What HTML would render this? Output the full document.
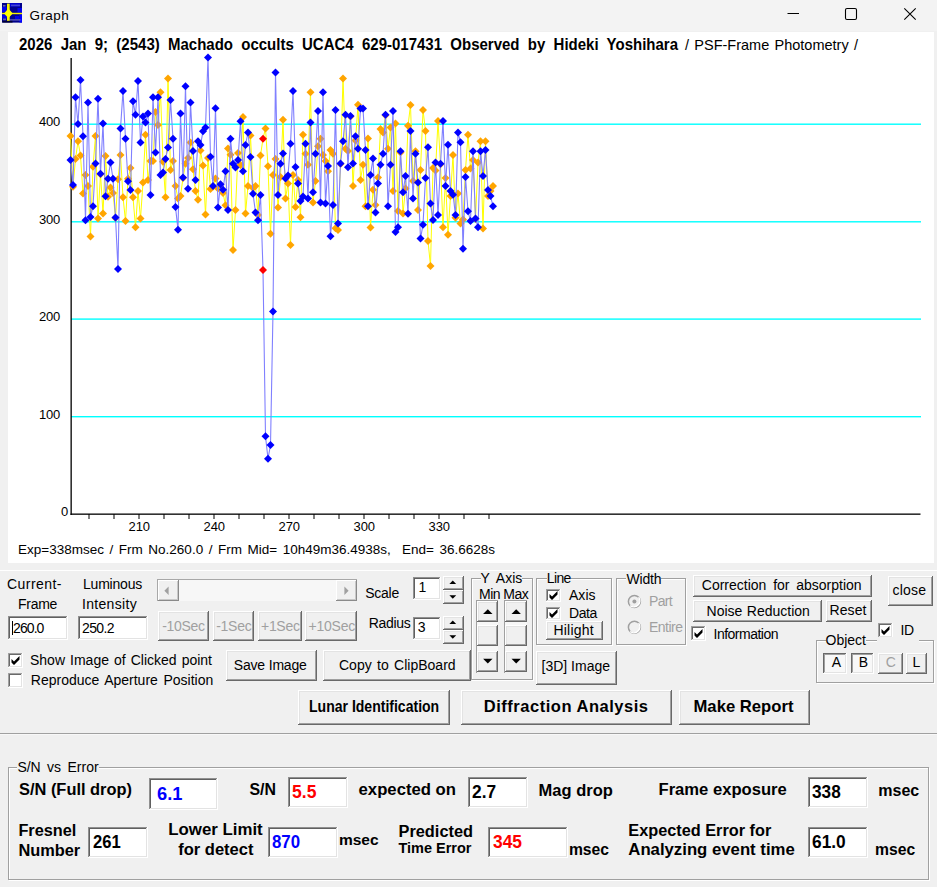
<!DOCTYPE html>
<html lang="en"><head><meta charset="utf-8"><title>Graph</title>
<style>
html,body{margin:0;padding:0}
body{width:937px;height:887px;position:relative;overflow:hidden;background:#f0f0f0;font-family:"Liberation Sans",sans-serif;color:#000}
.t{position:absolute;white-space:pre;z-index:5}
.btn{position:absolute;background:#f0f0f0;box-sizing:border-box;box-shadow:inset -1px -1px 0 #696969,inset 1px 1px 0 #fff,inset -2px -2px 0 #a0a0a0,inset 2px 2px 0 #e3e3e3}
.btnp{position:absolute;background:#f8f8f8;box-sizing:border-box;box-shadow:inset -1px -1px 0 #fff,inset 1px 1px 0 #696969,inset -2px -2px 0 #e3e3e3,inset 2px 2px 0 #a0a0a0}
.inp{position:absolute;background:#fff;box-sizing:border-box;box-shadow:inset -1px -1px 0 #fff,inset 1px 1px 0 #909090,inset -2px -2px 0 #e3e3e3,inset 2px 2px 0 #606060}
.chk{position:absolute;width:13px;height:13px;background:#fff;box-sizing:border-box;box-shadow:inset -1px -1px 0 #fff,inset 1px 1px 0 #a0a0a0,inset -2px -2px 0 #e3e3e3,inset 2px 2px 0 #696969}
.chk svg{position:absolute;left:0;top:0}
.grp{position:absolute;border:1px solid #a0a0a0;box-shadow:1px 1px 0 #fff, inset 1px 1px 0 #fff}
.sb{position:absolute;background:#f7f7f7}
.btnf{position:absolute;background:#f0f0f0;box-sizing:border-box;box-shadow:inset -1px -1px 0 #8a8a8a,inset 1px 1px 0 #fff,inset -2px -2px 0 #c8c8c8}
svg.ov{position:absolute;left:0;top:0;z-index:4;pointer-events:none}
</style></head>
<body>
<div style="position:absolute;left:0;top:0;width:937px;height:31px;background:#f3f3f3"></div>
<svg style="position:absolute;left:0;top:0" width="24" height="24" viewBox="0 0 24 24"><rect x="2" y="3" width="20" height="19.6" fill="#00008c"/><rect x="2" y="7" width="4.5" height="5" fill="#0000f0"/><rect x="2" y="14.5" width="5" height="4" fill="#0000e0"/><rect x="17.5" y="8" width="4.5" height="4.5" fill="#0000f0"/><rect x="19.5" y="14.5" width="2.5" height="8" fill="#0000ff"/><rect x="10" y="3.2" width="10" height="3.5" fill="#0000d8"/><rect x="15" y="16" width="4" height="3" fill="#0000e8"/><rect x="3" y="5" width="2.5" height="1.6" fill="#8c8cc8" opacity=".7"/><rect x="11" y="4.6" width="9" height="1.6" fill="#7c7ccc" opacity=".55"/><rect x="3" y="18.5" width="3" height="1.8" fill="#9c9cc0" opacity=".6"/><rect x="9.5" y="19" width="11" height="1.8" fill="#8080c8" opacity=".55"/><rect x="2.5" y="20.8" width="10" height="1.8" fill="#000020" opacity=".8"/><rect x="2" y="12.8" width="20" height="1.4" fill="#f4f000"/><rect x="7" y="3.6" width="2.7" height="17.2" fill="#f8f400"/><polygon points="4,13.5 8.3,8.6 12.8,13.5 8.3,18" fill="#ffff00"/></svg>
<svg class="ov" width="937" height="31"><path d="M787.5 13.5H799" stroke="#000" stroke-width="1" fill="none"/><rect x="845.5" y="8.5" width="11" height="11" rx="1.5" fill="none" stroke="#000" stroke-width="1.1"/><path d="M904.3 8.3L915.7 19.7M915.7 8.3L904.3 19.7" stroke="#000" stroke-width="1.1" fill="none"/></svg>
<svg id="chart" width="926" height="531" viewBox="8 32 926 531" style="position:absolute;left:8px;top:32px">
<rect x="8" y="32" width="926" height="531" fill="#fff"/>
<rect x="71" y="123.50" width="850" height="1.4" fill="#00ffff"/>
<rect x="71" y="221.10" width="850" height="1.4" fill="#00ffff"/>
<rect x="71" y="318.40" width="850" height="1.4" fill="#00ffff"/>
<rect x="71" y="416.00" width="850" height="1.4" fill="#00ffff"/>
<rect x="70.5" y="58" width="1.3" height="457" fill="#000"/>
<rect x="70.5" y="513.5" width="850" height="1.3" fill="#000"/>
<polyline points="70.5,136.0 73.0,186.7 75.5,159.0 78.0,141.3 80.5,155.5 83.0,193.6 85.5,175.0 88.0,186.0 90.5,236.4 93.0,166.7 95.5,136.0 98.0,218.4 100.5,174.2 103.0,213.4 105.5,156.0 108.0,196.7 110.5,187.4 113.0,193.0 115.5,217.9 118.0,179.3 120.5,155.0 123.0,197.3 125.5,220.9 128.0,178.7 130.5,168.0 133.0,197.3 135.5,227.3 138.0,191.0 140.5,218.6 143.0,182.4 145.5,134.8 148.0,180.0 150.5,161.0 153.0,161.0 155.5,112.0 158.0,125.0 160.5,92.3 163.0,161.7 165.5,197.3 168.0,78.6 170.5,170.0 173.0,161.0 175.5,186.0 178.0,198.5 180.5,196.0 183.0,177.9 185.5,163.7 188.0,158.0 190.5,142.4 193.0,169.3 195.5,191.0 198.0,199.7 200.5,150.5 203.0,165.6 205.5,214.6 208.0,158.0 210.5,189.0 213.0,186.5 215.5,178.6 218.0,188.5 220.5,184.7 223.0,192.9 225.5,205.3 228.0,148.6 230.5,154.8 233.0,250.0 235.5,209.9 238.0,153.0 240.5,165.0 243.0,117.0 245.5,213.6 248.0,186.0 250.5,135.6 253.0,188.0 255.5,186.0 258.0,215.0 260.5,155.5 263.0,138.7 265.5,128.4 268.0,166.2 270.5,233.8 273.0,174.9 275.5,159.0 278.0,207.4 280.5,177.0 283.0,119.7 285.5,198.5 288.0,183.6 290.5,245.0 293.0,174.9 295.5,207.1 298.0,179.9 300.5,217.3 303.0,134.8 305.5,153.7 308.0,164.8 310.5,92.3 313.0,202.4 315.5,181.1 318.0,146.2 320.5,138.8 323.0,155.0 325.5,161.0 328.0,171.2 330.5,150.0 333.0,153.7 335.5,228.2 338.0,230.1 340.5,164.1 343.0,78.6 345.5,148.7 348.0,151.0 350.5,116.5 353.0,186.0 355.5,140.6 358.0,104.7 360.5,179.9 363.0,164.8 365.5,206.2 368.0,138.4 370.5,227.6 373.0,189.8 375.5,204.9 378.0,177.4 380.5,128.9 383.0,132.6 385.5,115.3 388.0,148.7 390.5,127.6 393.0,191.0 395.5,123.5 398.0,211.0 400.5,152.5 403.0,213.4 405.5,188.6 408.0,125.8 410.5,105.0 413.0,181.0 415.5,151.3 418.0,210.0 420.5,169.9 423.0,110.0 425.5,131.0 428.0,241.0 430.5,266.0 433.0,168.0 435.5,170.5 438.0,120.9 440.5,164.2 443.0,227.3 445.5,178.0 448.0,234.8 450.5,196.0 453.0,155.0 455.5,217.8 458.0,193.6 460.5,223.6 463.0,219.6 465.5,169.9 468.0,134.8 470.5,168.6 473.0,160.0 475.5,218.9 478.0,162.4 480.5,141.3 483.0,228.6 485.5,141.3 488.0,196.0 490.5,191.0 493.0,186.0" fill="none" stroke="#ffff00" stroke-width="1"/>
<polygon points="66.5,136.0 70.5,132.0 74.5,136.0 70.5,140.0" fill="#ffa500"/>
<polygon points="69.0,186.7 73.0,182.7 77.0,186.7 73.0,190.7" fill="#ffa500"/>
<polygon points="71.5,159.0 75.5,155.0 79.5,159.0 75.5,163.0" fill="#ffa500"/>
<polygon points="74.0,141.3 78.0,137.3 82.0,141.3 78.0,145.3" fill="#ffa500"/>
<polygon points="76.5,155.5 80.5,151.5 84.5,155.5 80.5,159.5" fill="#ffa500"/>
<polygon points="79.0,193.6 83.0,189.6 87.0,193.6 83.0,197.6" fill="#ffa500"/>
<polygon points="81.5,175.0 85.5,171.0 89.5,175.0 85.5,179.0" fill="#ffa500"/>
<polygon points="84.0,186.0 88.0,182.0 92.0,186.0 88.0,190.0" fill="#ffa500"/>
<polygon points="86.5,236.4 90.5,232.4 94.5,236.4 90.5,240.4" fill="#ffa500"/>
<polygon points="89.0,166.7 93.0,162.7 97.0,166.7 93.0,170.7" fill="#ffa500"/>
<polygon points="91.5,136.0 95.5,132.0 99.5,136.0 95.5,140.0" fill="#ffa500"/>
<polygon points="94.0,218.4 98.0,214.4 102.0,218.4 98.0,222.4" fill="#ffa500"/>
<polygon points="96.5,174.2 100.5,170.2 104.5,174.2 100.5,178.2" fill="#ffa500"/>
<polygon points="99.0,213.4 103.0,209.4 107.0,213.4 103.0,217.4" fill="#ffa500"/>
<polygon points="101.5,156.0 105.5,152.0 109.5,156.0 105.5,160.0" fill="#ffa500"/>
<polygon points="104.0,196.7 108.0,192.7 112.0,196.7 108.0,200.7" fill="#ffa500"/>
<polygon points="106.5,187.4 110.5,183.4 114.5,187.4 110.5,191.4" fill="#ffa500"/>
<polygon points="109.0,193.0 113.0,189.0 117.0,193.0 113.0,197.0" fill="#ffa500"/>
<polygon points="111.5,217.9 115.5,213.9 119.5,217.9 115.5,221.9" fill="#ffa500"/>
<polygon points="114.0,179.3 118.0,175.3 122.0,179.3 118.0,183.3" fill="#ffa500"/>
<polygon points="116.5,155.0 120.5,151.0 124.5,155.0 120.5,159.0" fill="#ffa500"/>
<polygon points="119.0,197.3 123.0,193.3 127.0,197.3 123.0,201.3" fill="#ffa500"/>
<polygon points="121.5,220.9 125.5,216.9 129.5,220.9 125.5,224.9" fill="#ffa500"/>
<polygon points="124.0,178.7 128.0,174.7 132.0,178.7 128.0,182.7" fill="#ffa500"/>
<polygon points="126.5,168.0 130.5,164.0 134.5,168.0 130.5,172.0" fill="#ffa500"/>
<polygon points="129.0,197.3 133.0,193.3 137.0,197.3 133.0,201.3" fill="#ffa500"/>
<polygon points="131.5,227.3 135.5,223.3 139.5,227.3 135.5,231.3" fill="#ffa500"/>
<polygon points="134.0,191.0 138.0,187.0 142.0,191.0 138.0,195.0" fill="#ffa500"/>
<polygon points="136.5,218.6 140.5,214.6 144.5,218.6 140.5,222.6" fill="#ffa500"/>
<polygon points="139.0,182.4 143.0,178.4 147.0,182.4 143.0,186.4" fill="#ffa500"/>
<polygon points="141.5,134.8 145.5,130.8 149.5,134.8 145.5,138.8" fill="#ffa500"/>
<polygon points="144.0,180.0 148.0,176.0 152.0,180.0 148.0,184.0" fill="#ffa500"/>
<polygon points="146.5,161.0 150.5,157.0 154.5,161.0 150.5,165.0" fill="#ffa500"/>
<polygon points="149.0,161.0 153.0,157.0 157.0,161.0 153.0,165.0" fill="#ffa500"/>
<polygon points="151.5,112.0 155.5,108.0 159.5,112.0 155.5,116.0" fill="#ffa500"/>
<polygon points="154.0,125.0 158.0,121.0 162.0,125.0 158.0,129.0" fill="#ffa500"/>
<polygon points="156.5,92.3 160.5,88.3 164.5,92.3 160.5,96.3" fill="#ffa500"/>
<polygon points="159.0,161.7 163.0,157.7 167.0,161.7 163.0,165.7" fill="#ffa500"/>
<polygon points="161.5,197.3 165.5,193.3 169.5,197.3 165.5,201.3" fill="#ffa500"/>
<polygon points="164.0,78.6 168.0,74.6 172.0,78.6 168.0,82.6" fill="#ffa500"/>
<polygon points="166.5,170.0 170.5,166.0 174.5,170.0 170.5,174.0" fill="#ffa500"/>
<polygon points="169.0,161.0 173.0,157.0 177.0,161.0 173.0,165.0" fill="#ffa500"/>
<polygon points="171.5,186.0 175.5,182.0 179.5,186.0 175.5,190.0" fill="#ffa500"/>
<polygon points="174.0,198.5 178.0,194.5 182.0,198.5 178.0,202.5" fill="#ffa500"/>
<polygon points="176.5,196.0 180.5,192.0 184.5,196.0 180.5,200.0" fill="#ffa500"/>
<polygon points="179.0,177.9 183.0,173.9 187.0,177.9 183.0,181.9" fill="#ffa500"/>
<polygon points="181.5,163.7 185.5,159.7 189.5,163.7 185.5,167.7" fill="#ffa500"/>
<polygon points="184.0,158.0 188.0,154.0 192.0,158.0 188.0,162.0" fill="#ffa500"/>
<polygon points="186.5,142.4 190.5,138.4 194.5,142.4 190.5,146.4" fill="#ffa500"/>
<polygon points="189.0,169.3 193.0,165.3 197.0,169.3 193.0,173.3" fill="#ffa500"/>
<polygon points="191.5,191.0 195.5,187.0 199.5,191.0 195.5,195.0" fill="#ffa500"/>
<polygon points="194.0,199.7 198.0,195.7 202.0,199.7 198.0,203.7" fill="#ffa500"/>
<polygon points="196.5,150.5 200.5,146.5 204.5,150.5 200.5,154.5" fill="#ffa500"/>
<polygon points="199.0,165.6 203.0,161.6 207.0,165.6 203.0,169.6" fill="#ffa500"/>
<polygon points="201.5,214.6 205.5,210.6 209.5,214.6 205.5,218.6" fill="#ffa500"/>
<polygon points="204.0,158.0 208.0,154.0 212.0,158.0 208.0,162.0" fill="#ffa500"/>
<polygon points="206.5,189.0 210.5,185.0 214.5,189.0 210.5,193.0" fill="#ffa500"/>
<polygon points="209.0,186.5 213.0,182.5 217.0,186.5 213.0,190.5" fill="#ffa500"/>
<polygon points="211.5,178.6 215.5,174.6 219.5,178.6 215.5,182.6" fill="#ffa500"/>
<polygon points="214.0,188.5 218.0,184.5 222.0,188.5 218.0,192.5" fill="#ffa500"/>
<polygon points="216.5,184.7 220.5,180.7 224.5,184.7 220.5,188.7" fill="#ffa500"/>
<polygon points="219.0,192.9 223.0,188.9 227.0,192.9 223.0,196.9" fill="#ffa500"/>
<polygon points="221.5,205.3 225.5,201.3 229.5,205.3 225.5,209.3" fill="#ffa500"/>
<polygon points="224.0,148.6 228.0,144.6 232.0,148.6 228.0,152.6" fill="#ffa500"/>
<polygon points="226.5,154.8 230.5,150.8 234.5,154.8 230.5,158.8" fill="#ffa500"/>
<polygon points="229.0,250.0 233.0,246.0 237.0,250.0 233.0,254.0" fill="#ffa500"/>
<polygon points="231.5,209.9 235.5,205.9 239.5,209.9 235.5,213.9" fill="#ffa500"/>
<polygon points="234.0,153.0 238.0,149.0 242.0,153.0 238.0,157.0" fill="#ffa500"/>
<polygon points="236.5,165.0 240.5,161.0 244.5,165.0 240.5,169.0" fill="#ffa500"/>
<polygon points="239.0,117.0 243.0,113.0 247.0,117.0 243.0,121.0" fill="#ffa500"/>
<polygon points="241.5,213.6 245.5,209.6 249.5,213.6 245.5,217.6" fill="#ffa500"/>
<polygon points="244.0,186.0 248.0,182.0 252.0,186.0 248.0,190.0" fill="#ffa500"/>
<polygon points="246.5,135.6 250.5,131.6 254.5,135.6 250.5,139.6" fill="#ffa500"/>
<polygon points="249.0,188.0 253.0,184.0 257.0,188.0 253.0,192.0" fill="#ffa500"/>
<polygon points="251.5,186.0 255.5,182.0 259.5,186.0 255.5,190.0" fill="#ffa500"/>
<polygon points="254.0,215.0 258.0,211.0 262.0,215.0 258.0,219.0" fill="#ffa500"/>
<polygon points="256.5,155.5 260.5,151.5 264.5,155.5 260.5,159.5" fill="#ffa500"/>
<polygon points="259.0,138.7 263.0,134.7 267.0,138.7 263.0,142.7" fill="#ff0000"/>
<polygon points="261.5,128.4 265.5,124.4 269.5,128.4 265.5,132.4" fill="#ffa500"/>
<polygon points="264.0,166.2 268.0,162.2 272.0,166.2 268.0,170.2" fill="#ffa500"/>
<polygon points="266.5,233.8 270.5,229.8 274.5,233.8 270.5,237.8" fill="#ffa500"/>
<polygon points="269.0,174.9 273.0,170.9 277.0,174.9 273.0,178.9" fill="#ffa500"/>
<polygon points="271.5,159.0 275.5,155.0 279.5,159.0 275.5,163.0" fill="#ffa500"/>
<polygon points="274.0,207.4 278.0,203.4 282.0,207.4 278.0,211.4" fill="#ffa500"/>
<polygon points="276.5,177.0 280.5,173.0 284.5,177.0 280.5,181.0" fill="#ffa500"/>
<polygon points="279.0,119.7 283.0,115.7 287.0,119.7 283.0,123.7" fill="#ffa500"/>
<polygon points="281.5,198.5 285.5,194.5 289.5,198.5 285.5,202.5" fill="#ffa500"/>
<polygon points="284.0,183.6 288.0,179.6 292.0,183.6 288.0,187.6" fill="#ffa500"/>
<polygon points="286.5,245.0 290.5,241.0 294.5,245.0 290.5,249.0" fill="#ffa500"/>
<polygon points="289.0,174.9 293.0,170.9 297.0,174.9 293.0,178.9" fill="#ffa500"/>
<polygon points="291.5,207.1 295.5,203.1 299.5,207.1 295.5,211.1" fill="#ffa500"/>
<polygon points="294.0,179.9 298.0,175.9 302.0,179.9 298.0,183.9" fill="#ffa500"/>
<polygon points="296.5,217.3 300.5,213.3 304.5,217.3 300.5,221.3" fill="#ffa500"/>
<polygon points="299.0,134.8 303.0,130.8 307.0,134.8 303.0,138.8" fill="#ffa500"/>
<polygon points="301.5,153.7 305.5,149.7 309.5,153.7 305.5,157.7" fill="#ffa500"/>
<polygon points="304.0,164.8 308.0,160.8 312.0,164.8 308.0,168.8" fill="#ffa500"/>
<polygon points="306.5,92.3 310.5,88.3 314.5,92.3 310.5,96.3" fill="#ffa500"/>
<polygon points="309.0,202.4 313.0,198.4 317.0,202.4 313.0,206.4" fill="#ffa500"/>
<polygon points="311.5,181.1 315.5,177.1 319.5,181.1 315.5,185.1" fill="#ffa500"/>
<polygon points="314.0,146.2 318.0,142.2 322.0,146.2 318.0,150.2" fill="#ffa500"/>
<polygon points="316.5,138.8 320.5,134.8 324.5,138.8 320.5,142.8" fill="#ffa500"/>
<polygon points="319.0,155.0 323.0,151.0 327.0,155.0 323.0,159.0" fill="#ffa500"/>
<polygon points="321.5,161.0 325.5,157.0 329.5,161.0 325.5,165.0" fill="#ffa500"/>
<polygon points="324.0,171.2 328.0,167.2 332.0,171.2 328.0,175.2" fill="#ffa500"/>
<polygon points="326.5,150.0 330.5,146.0 334.5,150.0 330.5,154.0" fill="#ffa500"/>
<polygon points="329.0,153.7 333.0,149.7 337.0,153.7 333.0,157.7" fill="#ffa500"/>
<polygon points="331.5,228.2 335.5,224.2 339.5,228.2 335.5,232.2" fill="#ffa500"/>
<polygon points="334.0,230.1 338.0,226.1 342.0,230.1 338.0,234.1" fill="#ffa500"/>
<polygon points="336.5,164.1 340.5,160.1 344.5,164.1 340.5,168.1" fill="#ffa500"/>
<polygon points="339.0,78.6 343.0,74.6 347.0,78.6 343.0,82.6" fill="#ffa500"/>
<polygon points="341.5,148.7 345.5,144.7 349.5,148.7 345.5,152.7" fill="#ffa500"/>
<polygon points="344.0,151.0 348.0,147.0 352.0,151.0 348.0,155.0" fill="#ffa500"/>
<polygon points="346.5,116.5 350.5,112.5 354.5,116.5 350.5,120.5" fill="#ffa500"/>
<polygon points="349.0,186.0 353.0,182.0 357.0,186.0 353.0,190.0" fill="#ffa500"/>
<polygon points="351.5,140.6 355.5,136.6 359.5,140.6 355.5,144.6" fill="#ffa500"/>
<polygon points="354.0,104.7 358.0,100.7 362.0,104.7 358.0,108.7" fill="#ffa500"/>
<polygon points="356.5,179.9 360.5,175.9 364.5,179.9 360.5,183.9" fill="#ffa500"/>
<polygon points="359.0,164.8 363.0,160.8 367.0,164.8 363.0,168.8" fill="#ffa500"/>
<polygon points="361.5,206.2 365.5,202.2 369.5,206.2 365.5,210.2" fill="#ffa500"/>
<polygon points="364.0,138.4 368.0,134.4 372.0,138.4 368.0,142.4" fill="#ffa500"/>
<polygon points="366.5,227.6 370.5,223.6 374.5,227.6 370.5,231.6" fill="#ffa500"/>
<polygon points="369.0,189.8 373.0,185.8 377.0,189.8 373.0,193.8" fill="#ffa500"/>
<polygon points="371.5,204.9 375.5,200.9 379.5,204.9 375.5,208.9" fill="#ffa500"/>
<polygon points="374.0,177.4 378.0,173.4 382.0,177.4 378.0,181.4" fill="#ffa500"/>
<polygon points="376.5,128.9 380.5,124.9 384.5,128.9 380.5,132.9" fill="#ffa500"/>
<polygon points="379.0,132.6 383.0,128.6 387.0,132.6 383.0,136.6" fill="#ffa500"/>
<polygon points="381.5,115.3 385.5,111.3 389.5,115.3 385.5,119.3" fill="#ffa500"/>
<polygon points="384.0,148.7 388.0,144.7 392.0,148.7 388.0,152.7" fill="#ffa500"/>
<polygon points="386.5,127.6 390.5,123.6 394.5,127.6 390.5,131.6" fill="#ffa500"/>
<polygon points="389.0,191.0 393.0,187.0 397.0,191.0 393.0,195.0" fill="#ffa500"/>
<polygon points="391.5,123.5 395.5,119.5 399.5,123.5 395.5,127.5" fill="#ffa500"/>
<polygon points="394.0,211.0 398.0,207.0 402.0,211.0 398.0,215.0" fill="#ffa500"/>
<polygon points="396.5,152.5 400.5,148.5 404.5,152.5 400.5,156.5" fill="#ffa500"/>
<polygon points="399.0,213.4 403.0,209.4 407.0,213.4 403.0,217.4" fill="#ffa500"/>
<polygon points="401.5,188.6 405.5,184.6 409.5,188.6 405.5,192.6" fill="#ffa500"/>
<polygon points="404.0,125.8 408.0,121.8 412.0,125.8 408.0,129.8" fill="#ffa500"/>
<polygon points="406.5,105.0 410.5,101.0 414.5,105.0 410.5,109.0" fill="#ffa500"/>
<polygon points="409.0,181.0 413.0,177.0 417.0,181.0 413.0,185.0" fill="#ffa500"/>
<polygon points="411.5,151.3 415.5,147.3 419.5,151.3 415.5,155.3" fill="#ffa500"/>
<polygon points="414.0,210.0 418.0,206.0 422.0,210.0 418.0,214.0" fill="#ffa500"/>
<polygon points="416.5,169.9 420.5,165.9 424.5,169.9 420.5,173.9" fill="#ffa500"/>
<polygon points="419.0,110.0 423.0,106.0 427.0,110.0 423.0,114.0" fill="#ffa500"/>
<polygon points="421.5,131.0 425.5,127.0 429.5,131.0 425.5,135.0" fill="#ffa500"/>
<polygon points="424.0,241.0 428.0,237.0 432.0,241.0 428.0,245.0" fill="#ffa500"/>
<polygon points="426.5,266.0 430.5,262.0 434.5,266.0 430.5,270.0" fill="#ffa500"/>
<polygon points="429.0,168.0 433.0,164.0 437.0,168.0 433.0,172.0" fill="#ffa500"/>
<polygon points="431.5,170.5 435.5,166.5 439.5,170.5 435.5,174.5" fill="#ffa500"/>
<polygon points="434.0,120.9 438.0,116.9 442.0,120.9 438.0,124.9" fill="#ffa500"/>
<polygon points="436.5,164.2 440.5,160.2 444.5,164.2 440.5,168.2" fill="#ffa500"/>
<polygon points="439.0,227.3 443.0,223.3 447.0,227.3 443.0,231.3" fill="#ffa500"/>
<polygon points="441.5,178.0 445.5,174.0 449.5,178.0 445.5,182.0" fill="#ffa500"/>
<polygon points="444.0,234.8 448.0,230.8 452.0,234.8 448.0,238.8" fill="#ffa500"/>
<polygon points="446.5,196.0 450.5,192.0 454.5,196.0 450.5,200.0" fill="#ffa500"/>
<polygon points="449.0,155.0 453.0,151.0 457.0,155.0 453.0,159.0" fill="#ffa500"/>
<polygon points="451.5,217.8 455.5,213.8 459.5,217.8 455.5,221.8" fill="#ffa500"/>
<polygon points="454.0,193.6 458.0,189.6 462.0,193.6 458.0,197.6" fill="#ffa500"/>
<polygon points="456.5,223.6 460.5,219.6 464.5,223.6 460.5,227.6" fill="#ffa500"/>
<polygon points="459.0,219.6 463.0,215.6 467.0,219.6 463.0,223.6" fill="#ffa500"/>
<polygon points="461.5,169.9 465.5,165.9 469.5,169.9 465.5,173.9" fill="#ffa500"/>
<polygon points="464.0,134.8 468.0,130.8 472.0,134.8 468.0,138.8" fill="#ffa500"/>
<polygon points="466.5,168.6 470.5,164.6 474.5,168.6 470.5,172.6" fill="#ffa500"/>
<polygon points="469.0,160.0 473.0,156.0 477.0,160.0 473.0,164.0" fill="#ffa500"/>
<polygon points="471.5,218.9 475.5,214.9 479.5,218.9 475.5,222.9" fill="#ffa500"/>
<polygon points="474.0,162.4 478.0,158.4 482.0,162.4 478.0,166.4" fill="#ffa500"/>
<polygon points="476.5,141.3 480.5,137.3 484.5,141.3 480.5,145.3" fill="#ffa500"/>
<polygon points="479.0,228.6 483.0,224.6 487.0,228.6 483.0,232.6" fill="#ffa500"/>
<polygon points="481.5,141.3 485.5,137.3 489.5,141.3 485.5,145.3" fill="#ffa500"/>
<polygon points="484.0,196.0 488.0,192.0 492.0,196.0 488.0,200.0" fill="#ffa500"/>
<polygon points="486.5,191.0 490.5,187.0 494.5,191.0 490.5,195.0" fill="#ffa500"/>
<polygon points="489.0,186.0 493.0,182.0 497.0,186.0 493.0,190.0" fill="#ffa500"/>
<polyline points="70.5,159.9 73.0,184.9 75.5,97.2 78.0,123.9 80.5,79.9 83.0,136.3 85.5,220.2 88.0,102.4 90.5,217.1 93.0,206.2 95.5,163.6 98.0,98.7 100.5,173.7 103.0,123.5 105.5,196.3 108.0,178.7 110.5,162.4 113.0,178.7 115.5,217.4 118.0,268.9 120.5,128.6 123.0,91.0 125.5,138.8 128.0,181.2 130.5,189.9 133.0,101.2 135.5,114.8 138.0,81.0 140.5,142.5 143.0,116.5 145.5,122.4 148.0,113.6 150.5,195.0 153.0,97.2 155.5,152.4 158.0,97.2 160.5,175.0 163.0,172.5 165.5,158.9 168.0,147.5 170.5,100.0 173.0,138.8 175.5,207.1 178.0,229.7 180.5,113.5 183.0,177.4 185.5,86.2 188.0,188.8 190.5,102.4 193.0,151.0 195.5,179.9 198.0,141.2 200.5,145.0 203.0,131.3 205.5,127.5 208.0,57.4 210.5,156.7 213.0,186.0 215.5,108.3 218.0,207.4 220.5,184.2 223.0,189.8 225.5,171.2 228.0,209.9 230.5,138.7 233.0,163.7 235.5,167.4 238.0,160.0 240.5,121.3 243.0,171.2 245.5,145.0 248.0,132.5 250.5,157.0 253.0,193.7 255.5,212.4 258.0,220.2 260.5,195.0 263.0,270.0 265.5,436.2 268.0,458.7 270.5,445.0 273.0,311.4 275.5,72.6 278.0,195.0 280.5,163.7 283.0,153.6 285.5,178.6 288.0,175.5 290.5,143.7 293.0,91.0 295.5,167.0 298.0,183.6 300.5,201.0 303.0,196.6 305.5,143.7 308.0,198.5 310.5,122.4 313.0,192.3 315.5,153.7 318.0,110.9 320.5,202.4 323.0,92.3 325.5,203.4 328.0,166.0 330.5,236.3 333.0,204.9 335.5,109.9 338.0,223.5 340.5,163.6 343.0,141.3 345.5,114.8 348.0,167.3 350.5,116.0 353.0,163.6 355.5,136.3 358.0,148.7 360.5,108.6 363.0,108.6 365.5,150.0 368.0,206.2 370.5,174.9 373.0,158.6 375.5,212.4 378.0,183.6 380.5,164.8 383.0,153.7 385.5,114.8 388.0,206.2 390.5,164.8 393.0,110.9 395.5,232.0 398.0,227.3 400.5,151.3 403.0,192.3 405.5,176.0 408.0,213.7 410.5,131.0 413.0,198.5 415.5,153.7 418.0,182.4 420.5,238.6 423.0,224.8 425.5,178.0 428.0,147.2 430.5,203.5 433.0,219.9 435.5,162.4 438.0,214.9 440.5,163.7 443.0,120.9 445.5,186.1 448.0,144.8 450.5,191.1 453.0,194.8 455.5,214.9 458.0,132.4 460.5,142.3 463.0,248.8 465.5,177.0 468.0,211.2 470.5,221.1 473.0,151.3 475.5,218.4 478.0,227.3 480.5,151.3 483.0,176.0 485.5,150.0 488.0,189.9 490.5,196.0 493.0,206.2" fill="none" stroke="#8080ff" stroke-width="1.1"/>
<polygon points="66.5,159.9 70.5,155.9 74.5,159.9 70.5,163.9" fill="#0000ff"/>
<polygon points="69.0,184.9 73.0,180.9 77.0,184.9 73.0,188.9" fill="#0000ff"/>
<polygon points="71.5,97.2 75.5,93.2 79.5,97.2 75.5,101.2" fill="#0000ff"/>
<polygon points="74.0,123.9 78.0,119.9 82.0,123.9 78.0,127.9" fill="#0000ff"/>
<polygon points="76.5,79.9 80.5,75.9 84.5,79.9 80.5,83.9" fill="#0000ff"/>
<polygon points="79.0,136.3 83.0,132.3 87.0,136.3 83.0,140.3" fill="#0000ff"/>
<polygon points="81.5,220.2 85.5,216.2 89.5,220.2 85.5,224.2" fill="#0000ff"/>
<polygon points="84.0,102.4 88.0,98.4 92.0,102.4 88.0,106.4" fill="#0000ff"/>
<polygon points="86.5,217.1 90.5,213.1 94.5,217.1 90.5,221.1" fill="#0000ff"/>
<polygon points="89.0,206.2 93.0,202.2 97.0,206.2 93.0,210.2" fill="#0000ff"/>
<polygon points="91.5,163.6 95.5,159.6 99.5,163.6 95.5,167.6" fill="#0000ff"/>
<polygon points="94.0,98.7 98.0,94.7 102.0,98.7 98.0,102.7" fill="#0000ff"/>
<polygon points="96.5,173.7 100.5,169.7 104.5,173.7 100.5,177.7" fill="#0000ff"/>
<polygon points="99.0,123.5 103.0,119.5 107.0,123.5 103.0,127.5" fill="#0000ff"/>
<polygon points="101.5,196.3 105.5,192.3 109.5,196.3 105.5,200.3" fill="#0000ff"/>
<polygon points="104.0,178.7 108.0,174.7 112.0,178.7 108.0,182.7" fill="#0000ff"/>
<polygon points="106.5,162.4 110.5,158.4 114.5,162.4 110.5,166.4" fill="#0000ff"/>
<polygon points="109.0,178.7 113.0,174.7 117.0,178.7 113.0,182.7" fill="#0000ff"/>
<polygon points="111.5,217.4 115.5,213.4 119.5,217.4 115.5,221.4" fill="#0000ff"/>
<polygon points="114.0,268.9 118.0,264.9 122.0,268.9 118.0,272.9" fill="#0000ff"/>
<polygon points="116.5,128.6 120.5,124.6 124.5,128.6 120.5,132.6" fill="#0000ff"/>
<polygon points="119.0,91.0 123.0,87.0 127.0,91.0 123.0,95.0" fill="#0000ff"/>
<polygon points="121.5,138.8 125.5,134.8 129.5,138.8 125.5,142.8" fill="#0000ff"/>
<polygon points="124.0,181.2 128.0,177.2 132.0,181.2 128.0,185.2" fill="#0000ff"/>
<polygon points="126.5,189.9 130.5,185.9 134.5,189.9 130.5,193.9" fill="#0000ff"/>
<polygon points="129.0,101.2 133.0,97.2 137.0,101.2 133.0,105.2" fill="#0000ff"/>
<polygon points="131.5,114.8 135.5,110.8 139.5,114.8 135.5,118.8" fill="#0000ff"/>
<polygon points="134.0,81.0 138.0,77.0 142.0,81.0 138.0,85.0" fill="#0000ff"/>
<polygon points="136.5,142.5 140.5,138.5 144.5,142.5 140.5,146.5" fill="#0000ff"/>
<polygon points="139.0,116.5 143.0,112.5 147.0,116.5 143.0,120.5" fill="#0000ff"/>
<polygon points="141.5,122.4 145.5,118.4 149.5,122.4 145.5,126.4" fill="#0000ff"/>
<polygon points="144.0,113.6 148.0,109.6 152.0,113.6 148.0,117.6" fill="#0000ff"/>
<polygon points="146.5,195.0 150.5,191.0 154.5,195.0 150.5,199.0" fill="#0000ff"/>
<polygon points="149.0,97.2 153.0,93.2 157.0,97.2 153.0,101.2" fill="#0000ff"/>
<polygon points="151.5,152.4 155.5,148.4 159.5,152.4 155.5,156.4" fill="#0000ff"/>
<polygon points="154.0,97.2 158.0,93.2 162.0,97.2 158.0,101.2" fill="#0000ff"/>
<polygon points="156.5,175.0 160.5,171.0 164.5,175.0 160.5,179.0" fill="#0000ff"/>
<polygon points="159.0,172.5 163.0,168.5 167.0,172.5 163.0,176.5" fill="#0000ff"/>
<polygon points="161.5,158.9 165.5,154.9 169.5,158.9 165.5,162.9" fill="#0000ff"/>
<polygon points="164.0,147.5 168.0,143.5 172.0,147.5 168.0,151.5" fill="#0000ff"/>
<polygon points="166.5,100.0 170.5,96.0 174.5,100.0 170.5,104.0" fill="#0000ff"/>
<polygon points="169.0,138.8 173.0,134.8 177.0,138.8 173.0,142.8" fill="#0000ff"/>
<polygon points="171.5,207.1 175.5,203.1 179.5,207.1 175.5,211.1" fill="#0000ff"/>
<polygon points="174.0,229.7 178.0,225.7 182.0,229.7 178.0,233.7" fill="#0000ff"/>
<polygon points="176.5,113.5 180.5,109.5 184.5,113.5 180.5,117.5" fill="#0000ff"/>
<polygon points="179.0,177.4 183.0,173.4 187.0,177.4 183.0,181.4" fill="#0000ff"/>
<polygon points="181.5,86.2 185.5,82.2 189.5,86.2 185.5,90.2" fill="#0000ff"/>
<polygon points="184.0,188.8 188.0,184.8 192.0,188.8 188.0,192.8" fill="#0000ff"/>
<polygon points="186.5,102.4 190.5,98.4 194.5,102.4 190.5,106.4" fill="#0000ff"/>
<polygon points="189.0,151.0 193.0,147.0 197.0,151.0 193.0,155.0" fill="#0000ff"/>
<polygon points="191.5,179.9 195.5,175.9 199.5,179.9 195.5,183.9" fill="#0000ff"/>
<polygon points="194.0,141.2 198.0,137.2 202.0,141.2 198.0,145.2" fill="#0000ff"/>
<polygon points="196.5,145.0 200.5,141.0 204.5,145.0 200.5,149.0" fill="#0000ff"/>
<polygon points="199.0,131.3 203.0,127.3 207.0,131.3 203.0,135.3" fill="#0000ff"/>
<polygon points="201.5,127.5 205.5,123.5 209.5,127.5 205.5,131.5" fill="#0000ff"/>
<polygon points="204.0,57.4 208.0,53.4 212.0,57.4 208.0,61.4" fill="#0000ff"/>
<polygon points="206.5,156.7 210.5,152.7 214.5,156.7 210.5,160.7" fill="#0000ff"/>
<polygon points="209.0,186.0 213.0,182.0 217.0,186.0 213.0,190.0" fill="#0000ff"/>
<polygon points="211.5,108.3 215.5,104.3 219.5,108.3 215.5,112.3" fill="#0000ff"/>
<polygon points="214.0,207.4 218.0,203.4 222.0,207.4 218.0,211.4" fill="#0000ff"/>
<polygon points="216.5,184.2 220.5,180.2 224.5,184.2 220.5,188.2" fill="#0000ff"/>
<polygon points="219.0,189.8 223.0,185.8 227.0,189.8 223.0,193.8" fill="#0000ff"/>
<polygon points="221.5,171.2 225.5,167.2 229.5,171.2 225.5,175.2" fill="#0000ff"/>
<polygon points="224.0,209.9 228.0,205.9 232.0,209.9 228.0,213.9" fill="#0000ff"/>
<polygon points="226.5,138.7 230.5,134.7 234.5,138.7 230.5,142.7" fill="#0000ff"/>
<polygon points="229.0,163.7 233.0,159.7 237.0,163.7 233.0,167.7" fill="#0000ff"/>
<polygon points="231.5,167.4 235.5,163.4 239.5,167.4 235.5,171.4" fill="#0000ff"/>
<polygon points="234.0,160.0 238.0,156.0 242.0,160.0 238.0,164.0" fill="#0000ff"/>
<polygon points="236.5,121.3 240.5,117.3 244.5,121.3 240.5,125.3" fill="#0000ff"/>
<polygon points="239.0,171.2 243.0,167.2 247.0,171.2 243.0,175.2" fill="#0000ff"/>
<polygon points="241.5,145.0 245.5,141.0 249.5,145.0 245.5,149.0" fill="#0000ff"/>
<polygon points="244.0,132.5 248.0,128.5 252.0,132.5 248.0,136.5" fill="#0000ff"/>
<polygon points="246.5,157.0 250.5,153.0 254.5,157.0 250.5,161.0" fill="#0000ff"/>
<polygon points="249.0,193.7 253.0,189.7 257.0,193.7 253.0,197.7" fill="#0000ff"/>
<polygon points="251.5,212.4 255.5,208.4 259.5,212.4 255.5,216.4" fill="#0000ff"/>
<polygon points="254.0,220.2 258.0,216.2 262.0,220.2 258.0,224.2" fill="#0000ff"/>
<polygon points="256.5,195.0 260.5,191.0 264.5,195.0 260.5,199.0" fill="#0000ff"/>
<polygon points="259.0,270.0 263.0,266.0 267.0,270.0 263.0,274.0" fill="#ff0000"/>
<polygon points="261.5,436.2 265.5,432.2 269.5,436.2 265.5,440.2" fill="#0000ff"/>
<polygon points="264.0,458.7 268.0,454.7 272.0,458.7 268.0,462.7" fill="#0000ff"/>
<polygon points="266.5,445.0 270.5,441.0 274.5,445.0 270.5,449.0" fill="#0000ff"/>
<polygon points="269.0,311.4 273.0,307.4 277.0,311.4 273.0,315.4" fill="#0000ff"/>
<polygon points="271.5,72.6 275.5,68.6 279.5,72.6 275.5,76.6" fill="#0000ff"/>
<polygon points="274.0,195.0 278.0,191.0 282.0,195.0 278.0,199.0" fill="#0000ff"/>
<polygon points="276.5,163.7 280.5,159.7 284.5,163.7 280.5,167.7" fill="#0000ff"/>
<polygon points="279.0,153.6 283.0,149.6 287.0,153.6 283.0,157.6" fill="#0000ff"/>
<polygon points="281.5,178.6 285.5,174.6 289.5,178.6 285.5,182.6" fill="#0000ff"/>
<polygon points="284.0,175.5 288.0,171.5 292.0,175.5 288.0,179.5" fill="#0000ff"/>
<polygon points="286.5,143.7 290.5,139.7 294.5,143.7 290.5,147.7" fill="#0000ff"/>
<polygon points="289.0,91.0 293.0,87.0 297.0,91.0 293.0,95.0" fill="#0000ff"/>
<polygon points="291.5,167.0 295.5,163.0 299.5,167.0 295.5,171.0" fill="#0000ff"/>
<polygon points="294.0,183.6 298.0,179.6 302.0,183.6 298.0,187.6" fill="#0000ff"/>
<polygon points="296.5,201.0 300.5,197.0 304.5,201.0 300.5,205.0" fill="#0000ff"/>
<polygon points="299.0,196.6 303.0,192.6 307.0,196.6 303.0,200.6" fill="#0000ff"/>
<polygon points="301.5,143.7 305.5,139.7 309.5,143.7 305.5,147.7" fill="#0000ff"/>
<polygon points="304.0,198.5 308.0,194.5 312.0,198.5 308.0,202.5" fill="#0000ff"/>
<polygon points="306.5,122.4 310.5,118.4 314.5,122.4 310.5,126.4" fill="#0000ff"/>
<polygon points="309.0,192.3 313.0,188.3 317.0,192.3 313.0,196.3" fill="#0000ff"/>
<polygon points="311.5,153.7 315.5,149.7 319.5,153.7 315.5,157.7" fill="#0000ff"/>
<polygon points="314.0,110.9 318.0,106.9 322.0,110.9 318.0,114.9" fill="#0000ff"/>
<polygon points="316.5,202.4 320.5,198.4 324.5,202.4 320.5,206.4" fill="#0000ff"/>
<polygon points="319.0,92.3 323.0,88.3 327.0,92.3 323.0,96.3" fill="#0000ff"/>
<polygon points="321.5,203.4 325.5,199.4 329.5,203.4 325.5,207.4" fill="#0000ff"/>
<polygon points="324.0,166.0 328.0,162.0 332.0,166.0 328.0,170.0" fill="#0000ff"/>
<polygon points="326.5,236.3 330.5,232.3 334.5,236.3 330.5,240.3" fill="#0000ff"/>
<polygon points="329.0,204.9 333.0,200.9 337.0,204.9 333.0,208.9" fill="#0000ff"/>
<polygon points="331.5,109.9 335.5,105.9 339.5,109.9 335.5,113.9" fill="#0000ff"/>
<polygon points="334.0,223.5 338.0,219.5 342.0,223.5 338.0,227.5" fill="#0000ff"/>
<polygon points="336.5,163.6 340.5,159.6 344.5,163.6 340.5,167.6" fill="#0000ff"/>
<polygon points="339.0,141.3 343.0,137.3 347.0,141.3 343.0,145.3" fill="#0000ff"/>
<polygon points="341.5,114.8 345.5,110.8 349.5,114.8 345.5,118.8" fill="#0000ff"/>
<polygon points="344.0,167.3 348.0,163.3 352.0,167.3 348.0,171.3" fill="#0000ff"/>
<polygon points="346.5,116.0 350.5,112.0 354.5,116.0 350.5,120.0" fill="#0000ff"/>
<polygon points="349.0,163.6 353.0,159.6 357.0,163.6 353.0,167.6" fill="#0000ff"/>
<polygon points="351.5,136.3 355.5,132.3 359.5,136.3 355.5,140.3" fill="#0000ff"/>
<polygon points="354.0,148.7 358.0,144.7 362.0,148.7 358.0,152.7" fill="#0000ff"/>
<polygon points="356.5,108.6 360.5,104.6 364.5,108.6 360.5,112.6" fill="#0000ff"/>
<polygon points="359.0,108.6 363.0,104.6 367.0,108.6 363.0,112.6" fill="#0000ff"/>
<polygon points="361.5,150.0 365.5,146.0 369.5,150.0 365.5,154.0" fill="#0000ff"/>
<polygon points="364.0,206.2 368.0,202.2 372.0,206.2 368.0,210.2" fill="#0000ff"/>
<polygon points="366.5,174.9 370.5,170.9 374.5,174.9 370.5,178.9" fill="#0000ff"/>
<polygon points="369.0,158.6 373.0,154.6 377.0,158.6 373.0,162.6" fill="#0000ff"/>
<polygon points="371.5,212.4 375.5,208.4 379.5,212.4 375.5,216.4" fill="#0000ff"/>
<polygon points="374.0,183.6 378.0,179.6 382.0,183.6 378.0,187.6" fill="#0000ff"/>
<polygon points="376.5,164.8 380.5,160.8 384.5,164.8 380.5,168.8" fill="#0000ff"/>
<polygon points="379.0,153.7 383.0,149.7 387.0,153.7 383.0,157.7" fill="#0000ff"/>
<polygon points="381.5,114.8 385.5,110.8 389.5,114.8 385.5,118.8" fill="#0000ff"/>
<polygon points="384.0,206.2 388.0,202.2 392.0,206.2 388.0,210.2" fill="#0000ff"/>
<polygon points="386.5,164.8 390.5,160.8 394.5,164.8 390.5,168.8" fill="#0000ff"/>
<polygon points="389.0,110.9 393.0,106.9 397.0,110.9 393.0,114.9" fill="#0000ff"/>
<polygon points="391.5,232.0 395.5,228.0 399.5,232.0 395.5,236.0" fill="#0000ff"/>
<polygon points="394.0,227.3 398.0,223.3 402.0,227.3 398.0,231.3" fill="#0000ff"/>
<polygon points="396.5,151.3 400.5,147.3 404.5,151.3 400.5,155.3" fill="#0000ff"/>
<polygon points="399.0,192.3 403.0,188.3 407.0,192.3 403.0,196.3" fill="#0000ff"/>
<polygon points="401.5,176.0 405.5,172.0 409.5,176.0 405.5,180.0" fill="#0000ff"/>
<polygon points="404.0,213.7 408.0,209.7 412.0,213.7 408.0,217.7" fill="#0000ff"/>
<polygon points="406.5,131.0 410.5,127.0 414.5,131.0 410.5,135.0" fill="#0000ff"/>
<polygon points="409.0,198.5 413.0,194.5 417.0,198.5 413.0,202.5" fill="#0000ff"/>
<polygon points="411.5,153.7 415.5,149.7 419.5,153.7 415.5,157.7" fill="#0000ff"/>
<polygon points="414.0,182.4 418.0,178.4 422.0,182.4 418.0,186.4" fill="#0000ff"/>
<polygon points="416.5,238.6 420.5,234.6 424.5,238.6 420.5,242.6" fill="#0000ff"/>
<polygon points="419.0,224.8 423.0,220.8 427.0,224.8 423.0,228.8" fill="#0000ff"/>
<polygon points="421.5,178.0 425.5,174.0 429.5,178.0 425.5,182.0" fill="#0000ff"/>
<polygon points="424.0,147.2 428.0,143.2 432.0,147.2 428.0,151.2" fill="#0000ff"/>
<polygon points="426.5,203.5 430.5,199.5 434.5,203.5 430.5,207.5" fill="#0000ff"/>
<polygon points="429.0,219.9 433.0,215.9 437.0,219.9 433.0,223.9" fill="#0000ff"/>
<polygon points="431.5,162.4 435.5,158.4 439.5,162.4 435.5,166.4" fill="#0000ff"/>
<polygon points="434.0,214.9 438.0,210.9 442.0,214.9 438.0,218.9" fill="#0000ff"/>
<polygon points="436.5,163.7 440.5,159.7 444.5,163.7 440.5,167.7" fill="#0000ff"/>
<polygon points="439.0,120.9 443.0,116.9 447.0,120.9 443.0,124.9" fill="#0000ff"/>
<polygon points="441.5,186.1 445.5,182.1 449.5,186.1 445.5,190.1" fill="#0000ff"/>
<polygon points="444.0,144.8 448.0,140.8 452.0,144.8 448.0,148.8" fill="#0000ff"/>
<polygon points="446.5,191.1 450.5,187.1 454.5,191.1 450.5,195.1" fill="#0000ff"/>
<polygon points="449.0,194.8 453.0,190.8 457.0,194.8 453.0,198.8" fill="#0000ff"/>
<polygon points="451.5,214.9 455.5,210.9 459.5,214.9 455.5,218.9" fill="#0000ff"/>
<polygon points="454.0,132.4 458.0,128.4 462.0,132.4 458.0,136.4" fill="#0000ff"/>
<polygon points="456.5,142.3 460.5,138.3 464.5,142.3 460.5,146.3" fill="#0000ff"/>
<polygon points="459.0,248.8 463.0,244.8 467.0,248.8 463.0,252.8" fill="#0000ff"/>
<polygon points="461.5,177.0 465.5,173.0 469.5,177.0 465.5,181.0" fill="#0000ff"/>
<polygon points="464.0,211.2 468.0,207.2 472.0,211.2 468.0,215.2" fill="#0000ff"/>
<polygon points="466.5,221.1 470.5,217.1 474.5,221.1 470.5,225.1" fill="#0000ff"/>
<polygon points="469.0,151.3 473.0,147.3 477.0,151.3 473.0,155.3" fill="#0000ff"/>
<polygon points="471.5,218.4 475.5,214.4 479.5,218.4 475.5,222.4" fill="#0000ff"/>
<polygon points="474.0,227.3 478.0,223.3 482.0,227.3 478.0,231.3" fill="#0000ff"/>
<polygon points="476.5,151.3 480.5,147.3 484.5,151.3 480.5,155.3" fill="#0000ff"/>
<polygon points="479.0,176.0 483.0,172.0 487.0,176.0 483.0,180.0" fill="#0000ff"/>
<polygon points="481.5,150.0 485.5,146.0 489.5,150.0 485.5,154.0" fill="#0000ff"/>
<polygon points="484.0,189.9 488.0,185.9 492.0,189.9 488.0,193.9" fill="#0000ff"/>
<polygon points="486.5,196.0 490.5,192.0 494.5,196.0 490.5,200.0" fill="#0000ff"/>
<polygon points="489.0,206.2 493.0,202.2 497.0,206.2 493.0,210.2" fill="#0000ff"/>
<rect x="88.5" y="514" width="1" height="5" fill="#000"/>
<rect x="113.5" y="514" width="1" height="5" fill="#000"/>
<rect x="138.5" y="514" width="1" height="5" fill="#000"/>
<rect x="163.5" y="514" width="1" height="5" fill="#000"/>
<rect x="188.5" y="514" width="1" height="5" fill="#000"/>
<rect x="213.5" y="514" width="1" height="5" fill="#000"/>
<rect x="238.5" y="514" width="1" height="5" fill="#000"/>
<rect x="263.5" y="514" width="1" height="5" fill="#000"/>
<rect x="288.5" y="514" width="1" height="5" fill="#000"/>
<rect x="313.5" y="514" width="1" height="5" fill="#000"/>
<rect x="338.5" y="514" width="1" height="5" fill="#000"/>
<rect x="363.5" y="514" width="1" height="5" fill="#000"/>
<rect x="388.5" y="514" width="1" height="5" fill="#000"/>
<rect x="413.5" y="514" width="1" height="5" fill="#000"/>
<rect x="438.5" y="514" width="1" height="5" fill="#000"/>
<rect x="463.5" y="514" width="1" height="5" fill="#000"/>
<rect x="488.5" y="514" width="1" height="5" fill="#000"/>
</svg>
<div style="position:absolute;left:0;top:570px;width:937px;height:1px;background:#fff"></div>
<div style="position:absolute;left:0;top:733px;width:937px;height:1px;background:#a0a0a0"></div>
<div style="position:absolute;left:0;top:734px;width:937px;height:1px;background:#f8f8f8"></div>
<div class="inp" style="left:8px;top:616px;width:60px;height:24px"></div>
<div class="inp" style="left:78px;top:616px;width:70px;height:24px"></div>
<div style="position:absolute;left:12px;top:621px;width:1px;height:14px;background:#000;z-index:6"></div>
<div class="sb" style="left:157px;top:579px;width:200px;height:22px;box-shadow:inset 1px 1px 0 #a8a8a8"></div>
<div class="btnf" style="left:158px;top:580px;width:21px;height:21px"></div>
<div class="btnf" style="left:336px;top:580px;width:21px;height:21px"></div>
<div class="btn" style="left:158px;top:611px;width:51px;height:30px"></div>
<div class="btn" style="left:213px;top:611px;width:41px;height:30px"></div>
<div class="btn" style="left:258px;top:611px;width:44px;height:30px"></div>
<div class="btn" style="left:305px;top:611px;width:52px;height:30px"></div>
<div class="inp" style="left:413px;top:577px;width:28px;height:23px"></div>
<div class="inp" style="left:413px;top:617px;width:28px;height:23px"></div>
<div class="btn" style="left:443px;top:576px;width:21px;height:14px"></div>
<div class="btn" style="left:443px;top:590px;width:21px;height:14px"></div>
<div class="btn" style="left:443px;top:616px;width:21px;height:14px"></div>
<div class="btn" style="left:443px;top:630px;width:21px;height:14px"></div>
<div class="chk" style="left:8px;top:653px;width:15px;height:15px"><svg width="15" height="15" viewBox="0 0 15 15"><path d="M3.5 6.0 L6 8.5 L11.5 3.0 L11.5 6.5 L6 12.0 L3.5 9.5 Z" fill="#000"/></svg></div>
<div class="chk" style="left:8px;top:673px;width:15px;height:15px"></div>
<div class="btn" style="left:226px;top:650px;width:91px;height:31px"></div>
<div class="btn" style="left:323px;top:650px;width:148px;height:31px"></div>
<div class="btn" style="left:298px;top:690px;width:152px;height:35px"></div>
<div class="btn" style="left:461px;top:690px;width:211px;height:35px"></div>
<div class="btn" style="left:679px;top:690px;width:131px;height:35px"></div>
<div class="grp" style="left:471px;top:578px;width:60px;height:100px"></div>
<div class="sb" style="left:477px;top:601px;width:21px;height:71px"></div>
<div style="position:absolute;left:476px;top:600px;width:21px;height:72px;border-left:1px solid #a0a0a0;border-top:1px solid #a0a0a0;z-index:3"></div>
<div class="btn" style="left:477px;top:601px;width:21px;height:21px"></div>
<div class="btn" style="left:477px;top:625px;width:21px;height:21px"></div>
<div class="btn" style="left:477px;top:651px;width:21px;height:21px"></div>
<div class="sb" style="left:505px;top:601px;width:22px;height:71px"></div>
<div style="position:absolute;left:504px;top:600px;width:22px;height:72px;border-left:1px solid #a0a0a0;border-top:1px solid #a0a0a0;z-index:3"></div>
<div class="btn" style="left:505px;top:601px;width:22px;height:21px"></div>
<div class="btn" style="left:505px;top:625px;width:22px;height:21px"></div>
<div class="btn" style="left:505px;top:651px;width:22px;height:21px"></div>
<div class="grp" style="left:536px;top:578px;width:74px;height:65px"></div>
<div class="chk" style="left:546px;top:589px;width:15px;height:13px"><svg width="15" height="13" viewBox="0 0 15 13"><path d="M3.5 5.0 L6 7.5 L11.5 2.0 L11.5 5.5 L6 11.0 L3.5 8.5 Z" fill="#000"/></svg></div>
<div class="chk" style="left:546px;top:607px;width:15px;height:13px"><svg width="15" height="13" viewBox="0 0 15 13"><path d="M3.5 5.0 L6 7.5 L11.5 2.0 L11.5 5.5 L6 11.0 L3.5 8.5 Z" fill="#000"/></svg></div>
<div class="btn" style="left:546px;top:621px;width:57px;height:19px"></div>
<div class="grp" style="left:616px;top:578px;width:68px;height:65px"></div>
<div class="btn" style="left:536px;top:651px;width:81px;height:34px"></div>
<div class="btn" style="left:693px;top:575px;width:179px;height:22px"></div>
<div class="btn" style="left:693px;top:600px;width:129px;height:22px"></div>
<div class="btn" style="left:826px;top:600px;width:46px;height:22px"></div>
<div class="btn" style="left:888px;top:576px;width:45px;height:30px"></div>
<div class="chk" style="left:691px;top:626px;width:15px;height:15px"><svg width="15" height="15" viewBox="0 0 15 15"><path d="M3.5 6.0 L6 8.5 L11.5 3.0 L11.5 6.5 L6 12.0 L3.5 9.5 Z" fill="#000"/></svg></div>
<div class="chk" style="left:878px;top:623px;width:15px;height:15px"><svg width="15" height="15" viewBox="0 0 15 15"><path d="M3.5 6.0 L6 8.5 L11.5 3.0 L11.5 6.5 L6 12.0 L3.5 9.5 Z" fill="#000"/></svg></div>
<div class="grp" style="left:816px;top:640px;width:116px;height:41px"></div>
<div style="position:absolute;left:877px;top:637px;width:42px;height:5px;background:#f0f0f0"></div>
<div class="btnp" style="left:823px;top:653px;width:24px;height:21px"></div>
<div class="btnp" style="left:851px;top:653px;width:23px;height:21px"></div>
<div class="btn" style="left:878px;top:653px;width:25px;height:21px"></div>
<div class="btn" style="left:906px;top:653px;width:21px;height:21px"></div>
<div class="grp" style="left:8px;top:767px;width:919px;height:111px"></div>
<div class="inp" style="left:149px;top:778px;width:69px;height:32px"></div>
<div class="inp" style="left:288px;top:777px;width:60px;height:31px"></div>
<div class="inp" style="left:468px;top:777px;width:60px;height:31px"></div>
<div class="inp" style="left:808px;top:777px;width:60px;height:31px"></div>
<div class="inp" style="left:88px;top:827px;width:60px;height:31px"></div>
<div class="inp" style="left:268px;top:827px;width:70px;height:31px"></div>
<div class="inp" style="left:488px;top:827px;width:80px;height:31px"></div>
<div class="inp" style="left:808px;top:827px;width:60px;height:31px"></div>
<svg class="ov" width="937" height="887">
<polygon points="168.6,586.5999999999999 168.6,595.0 164.4,590.8" fill="#a0a0a0"/>
<polygon points="344.4,586.5999999999999 344.4,595.0 348.6,590.8" fill="#a0a0a0"/>
<polygon points="449.40000000000003,583.9000000000001 456.2,583.9000000000001 452.8,580.5" fill="#000"/>
<polygon points="449.40000000000003,595.3 456.2,595.3 452.8,598.7" fill="#000"/>
<polygon points="449.40000000000003,623.9000000000001 456.2,623.9000000000001 452.8,620.5" fill="#000"/>
<polygon points="449.40000000000003,635.3 456.2,635.3 452.8,638.7" fill="#000"/>
<polygon points="483.1,613.95 492.5,613.95 487.8,609.25" fill="#000"/>
<polygon points="483.1,658.85 492.5,658.85 487.8,663.5500000000001" fill="#000"/>
<polygon points="511.50000000000006,613.95 520.9000000000001,613.95 516.2,609.25" fill="#000"/>
<polygon points="511.50000000000006,658.85 520.9000000000001,658.85 516.2,663.5500000000001" fill="#000"/>
<circle cx="634.4" cy="601.4" r="6" fill="#f0f0f0" stroke="#a0a0a0" stroke-width="1.5"/>
<path d="M630.2 605.6 A6 6 0 0 0 638.6 597.1999999999999" fill="none" stroke="#fff" stroke-width="1.5"/>
<circle cx="634.4" cy="627.3" r="6" fill="#f0f0f0" stroke="#a0a0a0" stroke-width="1.5"/>
<path d="M630.2 631.5 A6 6 0 0 0 638.6 623.0999999999999" fill="none" stroke="#fff" stroke-width="1.5"/>
<circle cx="634.4" cy="601.4" r="2" fill="#a0a0a0"/>
</svg>
<span class="t" id="l0" style="left:29.5px;top:6.5px;font-size:13.5px;line-height:17px;letter-spacing:0.434px;">Graph</span>
<span class="t" id="l1" style="left:19.0px;top:35.4px;font-size:15px;line-height:19px;font-weight:bold;letter-spacing:0.000px;word-spacing:4.10px;transform:scaleY(1.1);transform-origin:0 78%;">2026 Jan 9; (2543) Machado occults UCAC4 629-017431 Observed by Hideki Yoshihara</span>
<span class="t" id="l2" style="left:685.0px;top:35.8px;font-size:14.5px;line-height:18px;letter-spacing:0.000px;word-spacing:1.26px;">/ PSF-Frame Photometry /</span>
<span class="t" id="l3" style="left:39.0px;top:114.0px;font-size:13px;line-height:16px;letter-spacing:-0.234px;">400</span>
<span class="t" id="l4" style="left:39.0px;top:211.5px;font-size:13px;line-height:16px;letter-spacing:-0.234px;">300</span>
<span class="t" id="l5" style="left:39.0px;top:309.0px;font-size:13px;line-height:16px;letter-spacing:-0.234px;">200</span>
<span class="t" id="l6" style="left:39.0px;top:406.5px;font-size:13px;line-height:16px;letter-spacing:-0.234px;">100</span>
<span class="t" id="l7" style="left:61.0px;top:503.5px;font-size:13px;line-height:16px;letter-spacing:-0.234px;">0</span>
<span class="t" id="l8" style="left:128.5px;top:519.3px;font-size:13px;line-height:16px;letter-spacing:-0.068px;">210</span>
<span class="t" id="l9" style="left:203.5px;top:519.3px;font-size:13px;line-height:16px;letter-spacing:-0.068px;">240</span>
<span class="t" id="l10" style="left:278.5px;top:519.3px;font-size:13px;line-height:16px;letter-spacing:-0.068px;">270</span>
<span class="t" id="l11" style="left:353.5px;top:519.3px;font-size:13px;line-height:16px;letter-spacing:-0.068px;">300</span>
<span class="t" id="l12" style="left:428.5px;top:519.3px;font-size:13px;line-height:16px;letter-spacing:-0.068px;">330</span>
<span class="t" id="l13" style="left:18.0px;top:540.5px;font-size:13.5px;line-height:17px;letter-spacing:0.000px;word-spacing:1.81px;">Exp=338msec / Frm No.260.0 / Frm Mid= 10h49m36.4938s,  End= 36.6628s</span>
<span class="t" id="l14" style="left:7.0px;top:575.0px;font-size:14px;line-height:18px;letter-spacing:0.455px;">Current-</span>
<span class="t" id="l15" style="left:18.0px;top:595.0px;font-size:14px;line-height:18px;letter-spacing:-0.291px;">Frame</span>
<span class="t" id="l16" style="left:83.0px;top:575.0px;font-size:14px;line-height:18px;letter-spacing:-0.213px;">Luminous</span>
<span class="t" id="l17" style="left:82.0px;top:595.0px;font-size:14px;line-height:18px;letter-spacing:0.318px;">Intensity</span>
<span class="t" id="l18" style="left:13.0px;top:619.0px;font-size:14px;line-height:18px;letter-spacing:-0.909px;">260.0</span>
<span class="t" id="l19" style="left:82.0px;top:619.0px;font-size:14px;line-height:18px;letter-spacing:-0.609px;">250.2</span>
<span class="t" id="l20" style="left:30.0px;top:651.0px;font-size:14px;line-height:18px;letter-spacing:0.000px;word-spacing:1.14px;">Show Image of Clicked point</span>
<span class="t" id="l21" style="left:30.8px;top:671.0px;font-size:14px;line-height:18px;letter-spacing:0.000px;word-spacing:1.75px;">Reproduce Aperture Position</span>
<span class="t" id="l22" style="left:162.3px;top:616.6px;font-size:14px;line-height:18px;color:#a0a0a0;letter-spacing:-0.343px;">-10Sec</span>
<span class="t" id="l23" style="left:216.2px;top:616.6px;font-size:14px;line-height:18px;color:#a0a0a0;letter-spacing:-0.276px;">-1Sec</span>
<span class="t" id="l24" style="left:261.0px;top:616.6px;font-size:14px;line-height:18px;color:#a0a0a0;letter-spacing:-0.299px;">+1Sec</span>
<span class="t" id="l25" style="left:308.5px;top:616.6px;font-size:14px;line-height:18px;color:#a0a0a0;letter-spacing:-0.229px;">+10Sec</span>
<span class="t" id="l26" style="left:365.3px;top:583.8px;font-size:14px;line-height:18px;letter-spacing:-0.266px;">Scale</span>
<span class="t" id="l27" style="left:418.5px;top:578.2px;font-size:14px;line-height:18px;letter-spacing:-2.297px;">1</span>
<span class="t" id="l28" style="left:368.8px;top:614.4px;font-size:14px;line-height:18px;letter-spacing:-0.316px;">Radius</span>
<span class="t" id="l29" style="left:417.7px;top:618.0px;font-size:14px;line-height:18px;letter-spacing:-1.497px;">3</span>
<span class="t" id="l30" style="left:233.8px;top:656.4px;font-size:14px;line-height:18px;letter-spacing:-0.182px;word-spacing:0.00px;">Save Image</span>
<span class="t" id="l31" style="left:339.0px;top:656.4px;font-size:14px;line-height:18px;letter-spacing:0.000px;word-spacing:1.49px;">Copy to ClipBoard</span>
<span class="t" id="l32" style="left:308.5px;top:697.0px;font-size:16px;line-height:20px;font-weight:bold;transform:scaleX(0.8770);transform-origin:0 0;">Lunar Identification</span>
<span class="t" id="l33" style="left:483.8px;top:696.0px;font-size:16.5px;line-height:21px;font-weight:bold;letter-spacing:0.518px;">Diffraction Analysis</span>
<span class="t" id="l34" style="left:693.5px;top:696.0px;font-size:16.66px;line-height:21px;font-weight:bold;">Make Report</span>
<span class="t" id="l35" style="left:480.6px;top:572.9px;font-size:14px;line-height:11px;letter-spacing:0.007px;word-spacing:3.00px;background:#f0f0f0;">Y Axis</span>
<span class="t" id="l36" style="left:479.0px;top:584.6px;font-size:14px;line-height:18px;letter-spacing:-0.529px;word-spacing:0.00px;">Min Max</span>
<span class="t" id="l37" style="left:546.7px;top:572.5px;font-size:14px;line-height:11px;letter-spacing:-0.592px;background:#f0f0f0;">Line</span>
<span class="t" id="l38" style="left:569.0px;top:586.0px;font-size:14px;line-height:18px;letter-spacing:0.037px;">Axis</span>
<span class="t" id="l39" style="left:569.0px;top:604.2px;font-size:14px;line-height:18px;letter-spacing:-0.395px;">Data</span>
<span class="t" id="l40" style="left:553.4px;top:620.8px;font-size:14px;line-height:18px;letter-spacing:0.242px;">Hilight</span>
<span class="t" id="l41" style="left:626.4px;top:573.9px;font-size:14px;line-height:11px;letter-spacing:-0.159px;background:#f0f0f0;">Width</span>
<span class="t" id="l42" style="left:649.0px;top:592.4px;font-size:14px;line-height:18px;color:#a0a0a0;letter-spacing:-0.672px;">Part</span>
<span class="t" id="l43" style="left:649.0px;top:618.3px;font-size:14px;line-height:18px;color:#a0a0a0;letter-spacing:-0.513px;">Entire</span>
<span class="t" id="l44" style="left:541.5px;top:657.3px;font-size:14px;line-height:18px;letter-spacing:0.000px;word-spacing:0.02px;">[3D] Image</span>
<span class="t" id="l45" style="left:701.8px;top:576.0px;font-size:14px;line-height:18px;letter-spacing:0.000px;word-spacing:2.86px;">Correction for absorption</span>
<span class="t" id="l46" style="left:706.6px;top:601.8px;font-size:14px;line-height:18px;letter-spacing:0.000px;word-spacing:0.57px;">Noise Reduction</span>
<span class="t" id="l47" style="left:829.5px;top:600.7px;font-size:14px;line-height:18px;letter-spacing:0.084px;">Reset</span>
<span class="t" id="l48" style="left:892.6px;top:581.2px;font-size:14px;line-height:18px;letter-spacing:0.202px;">close</span>
<span class="t" id="l49" style="left:713.5px;top:624.6px;font-size:14px;line-height:18px;letter-spacing:-0.504px;">Information</span>
<span class="t" id="l50" style="left:900.5px;top:620.7px;font-size:14px;line-height:18px;letter-spacing:-0.400px;">ID</span>
<span class="t" id="l51" style="left:825.6px;top:634.5px;font-size:14px;line-height:11px;letter-spacing:-0.045px;background:#f0f0f0;">Object</span>
<span class="t" id="l52" style="left:831.7px;top:653.4px;font-size:14px;line-height:18px;letter-spacing:-1.044px;">A</span>
<span class="t" id="l53" style="left:858.8px;top:653.4px;font-size:14px;line-height:18px;letter-spacing:-0.244px;">B</span>
<span class="t" id="l54" style="left:885.7px;top:653.4px;font-size:14px;line-height:18px;color:#a0a0a0;letter-spacing:-1.325px;">C</span>
<span class="t" id="l55" style="left:912.6px;top:653.4px;font-size:14px;line-height:18px;letter-spacing:-1.197px;">L</span>
<span class="t" id="l56" style="left:17.4px;top:761.8px;font-size:14px;line-height:11px;letter-spacing:0.000px;word-spacing:2.48px;background:#f0f0f0;">S/N vs Error</span>
<span class="t" id="l57" style="left:19.0px;top:779.0px;font-size:16.41px;line-height:20px;font-weight:bold;">S/N (Full drop)</span>
<span class="t" id="l58" style="left:157.0px;top:781.8px;font-size:18.5px;line-height:23px;font-weight:bold;color:#0000ff;transform:scaleX(0.9876);transform-origin:0 0;">6.1</span>
<span class="t" id="l59" style="left:18.4px;top:819.5px;font-size:16.3px;line-height:20px;font-weight:bold;">Fresnel</span>
<span class="t" id="l60" style="left:18.4px;top:839.7px;font-size:16.38px;line-height:20px;font-weight:bold;">Number</span>
<span class="t" id="l61" style="left:92.7px;top:829.6px;font-size:18.5px;line-height:23px;font-weight:bold;transform:scaleX(0.8972);transform-origin:0 0;">261</span>
<span class="t" id="l62" style="left:168.3px;top:819.7px;font-size:16.84px;line-height:20px;font-weight:bold;">Lower Limit</span>
<span class="t" id="l63" style="left:178.2px;top:839.6px;font-size:16.55px;line-height:20px;font-weight:bold;">for detect</span>
<span class="t" id="l64" style="left:272.3px;top:829.5px;font-size:18.5px;line-height:23px;font-weight:bold;color:#0000ff;transform:scaleX(0.9101);transform-origin:0 0;">870</span>
<span class="t" id="l65" style="left:338.9px;top:830.0px;font-size:15.52px;line-height:20px;font-weight:bold;">msec</span>
<span class="t" id="l66" style="left:249.5px;top:779.5px;font-size:15.9px;line-height:20px;font-weight:bold;">S/N</span>
<span class="t" id="l67" style="left:292.2px;top:779.6px;font-size:18.5px;line-height:23px;font-weight:bold;color:#ff0000;transform:scaleX(0.9487);transform-origin:0 0;">5.5</span>
<span class="t" id="l68" style="left:358.6px;top:779.5px;font-size:16.69px;line-height:20px;font-weight:bold;">expected on</span>
<span class="t" id="l69" style="left:472.3px;top:779.6px;font-size:18.5px;line-height:23px;font-weight:bold;transform:scaleX(0.9371);transform-origin:0 0;">2.7</span>
<span class="t" id="l70" style="left:538.6px;top:779.5px;font-size:16.51px;line-height:20px;font-weight:bold;">Mag drop</span>
<span class="t" id="l71" style="left:398.5px;top:821.0px;font-size:16.35px;line-height:20px;font-weight:bold;">Predicted</span>
<span class="t" id="l72" style="left:398.5px;top:838.9px;font-size:14.49px;line-height:19px;font-weight:bold;">Time Error</span>
<span class="t" id="l73" style="left:492.5px;top:830.3px;font-size:18.5px;line-height:23px;font-weight:bold;color:#ff0000;transform:scaleX(0.9393);transform-origin:0 0;">345</span>
<span class="t" id="l74" style="left:568.9px;top:839.6px;font-size:15.68px;line-height:20px;font-weight:bold;">msec</span>
<span class="t" id="l75" style="left:628.3px;top:819.7px;font-size:16.29px;line-height:20px;font-weight:bold;">Expected Error for</span>
<span class="t" id="l76" style="left:628.3px;top:839.6px;font-size:16.74px;line-height:20px;font-weight:bold;">Analyzing event time</span>
<span class="t" id="l77" style="left:658.5px;top:779.5px;font-size:16.63px;line-height:20px;font-weight:bold;">Frame exposure</span>
<span class="t" id="l78" style="left:812.3px;top:779.6px;font-size:18.5px;line-height:23px;font-weight:bold;transform:scaleX(0.9296);transform-origin:0 0;">338</span>
<span class="t" id="l79" style="left:878.3px;top:779.5px;font-size:16.03px;line-height:20px;font-weight:bold;">msec</span>
<span class="t" id="l80" style="left:812.3px;top:830.3px;font-size:18.5px;line-height:23px;font-weight:bold;transform:scaleX(0.9357);transform-origin:0 0;">61.0</span>
<span class="t" id="l81" style="left:875.0px;top:839.6px;font-size:15.72px;line-height:20px;font-weight:bold;">msec</span>
</body></html>
